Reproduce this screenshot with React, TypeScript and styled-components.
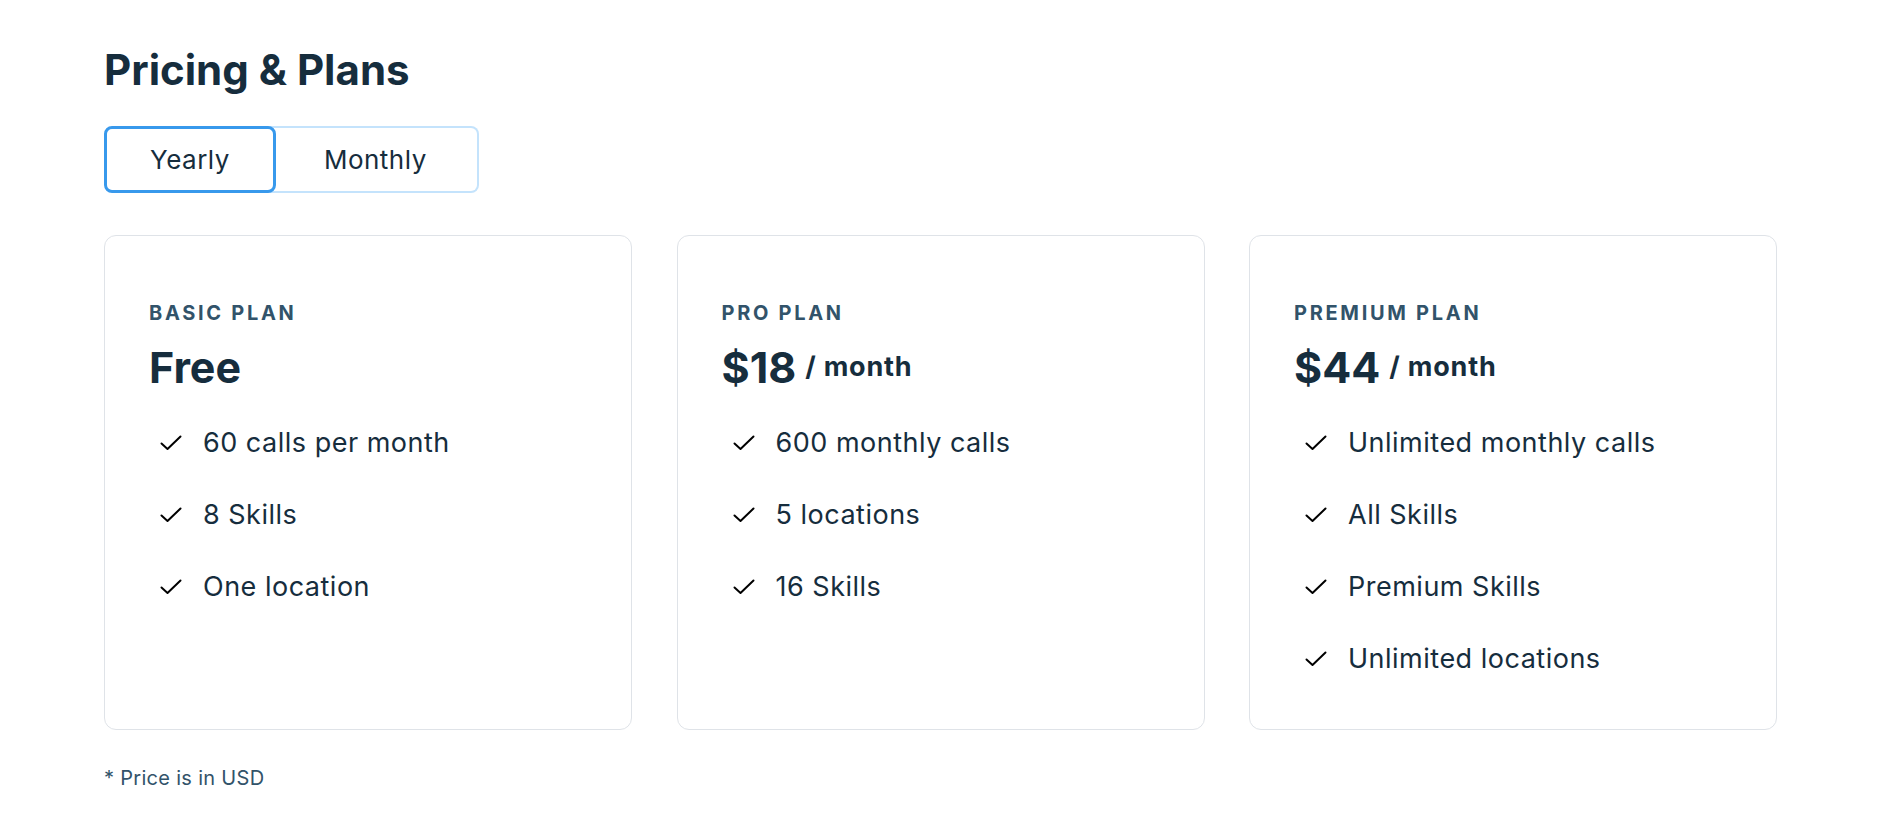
import React, {useState} from 'react';
import styled, {createGlobalStyle} from 'styled-components';

interface Plan {
    name: string;
    price: string;
    period?: string;
    features: string[];
}

const PLANS: Plan[] = [
    {
        name: 'Basic plan',
        price: 'Free',
        features: ['60 calls per month', '8 Skills', 'One location'],
    },
    {
        name: 'Pro plan',
        price: '$18',
        period: '/ month',
        features: ['600 monthly calls', '5 locations', '16 Skills'],
    },
    {
        name: 'Premium plan',
        price: '$44',
        period: '/ month',
        features: ['Unlimited monthly calls', 'All Skills', 'Premium Skills', 'Unlimited locations'],
    },
];

const CheckIcon = () => (
    <CheckSvg viewBox='0 0 24 24' width={24} height={24}>
        <path
            d='M2.5 12.5 L8.5 18 L21.5 5.5'
            fill='none'
            stroke='currentColor'
            strokeWidth={2}
            strokeLinecap='round'
            strokeLinejoin='round'
        />
    </CheckSvg>
);

const PlanCard = ({plan}: {plan: Plan}) => (
    <Card>
        <PlanName>{plan.name}</PlanName>
        <PriceRow>
            <Price>{plan.price}</Price>
            {plan.period && <Period>{plan.period}</Period>}
        </PriceRow>
        <FeatureList>
            {plan.features.map((f) => (
                <Feature key={f}>
                    <CheckIcon/>
                    <span>{f}</span>
                </Feature>
            ))}
        </FeatureList>
    </Card>
);

export default function App() {
    const [cycle, setCycle] = useState<'yearly' | 'monthly'>('yearly');

    return (
        <>
            <GlobalStyle/>
            <Page>
                <Title>{'Pricing & Plans'}</Title>
                <ToggleGroup>
                    <ToggleButton
                        $active={cycle === 'yearly'}
                        onClick={() => setCycle('yearly')}
                    >
                        {'Yearly'}
                    </ToggleButton>
                    <ToggleButton
                        $active={cycle === 'monthly'}
                        onClick={() => setCycle('monthly')}
                    >
                        {'Monthly'}
                    </ToggleButton>
                </ToggleGroup>
                <CardGrid>
                    {PLANS.map((p) => (
                        <PlanCard
                            key={p.name}
                            plan={p}
                        />
                    ))}
                </CardGrid>
                <Footnote>{'* Price is in USD'}</Footnote>
            </Page>
        </>
    );
}

const GlobalStyle = createGlobalStyle`
    body {
        margin: 0;
        background: #ffffff;
        font-family: Inter, 'Noto Sans', sans-serif;
        color: #162d3d;
    }
`;

const Page = styled.div`
    padding: 44px 0 40px 104px;
    display: flex;
    flex-direction: column;
    align-items: flex-start;
`;

const Title = styled.h1`
    margin: 0;
    font-size: 42px;
    line-height: 52px;
    font-weight: 700;
    color: #162d3d;
`;

const ToggleGroup = styled.div`
    display: flex;
    margin-top: 30px;
`;

const ToggleButton = styled.button<{$active: boolean}>`
    height: 67px;
    box-sizing: border-box;
    background: #ffffff;
    font-family: Inter, 'Noto Sans', sans-serif;
    font-size: 26px;
    font-weight: 400;
    letter-spacing: 0.5px;
    color: #162d3d;
    cursor: pointer;
    position: relative;
    ${(p) => (p.$active ? `
        z-index: 1;
        padding: 0 43px;
        border: 3px solid #3899ec;
        border-radius: 8px;
    ` : `
        z-index: 0;
        margin-left: -10px;
        padding: 0 50px 0 58px;
        border: 2px solid #c4e3fc;
        border-left: none;
        border-radius: 0 8px 8px 0;
    `)}
`;

const CardGrid = styled.div`
    display: grid;
    grid-template-columns: repeat(3, 528px);
    column-gap: 44.5px;
    margin-top: 42px;
`;

const Card = styled.div`
    box-sizing: border-box;
    border: 1px solid #dfe3e8;
    border-radius: 12px;
    padding: 65px 44px 52px;
    display: flex;
    flex-direction: column;
`;

const PlanName = styled.div`
    font-size: 20px;
    line-height: 24px;
    font-weight: 700;
    letter-spacing: 2.7px;
    text-transform: uppercase;
    color: #32536a;
`;

const PriceRow = styled.div`
    display: flex;
    align-items: center;
    gap: 9px;
    margin-top: 16px;
`;

const Price = styled.span`
    font-size: 43px;
    line-height: 52px;
    font-weight: 700;
    color: #162d3d;
`;

const Period = styled.span`
    font-size: 27px;
    line-height: 30px;
    font-weight: 700;
    letter-spacing: 0.8px;
    color: #162d3d;
`;

const FeatureList = styled.ul`
    list-style: none;
    margin: 32px 0 0;
    padding: 0;
    display: flex;
    flex-direction: column;
    gap: 36px;
`;

const Feature = styled.li`
    display: flex;
    align-items: center;
    gap: 20px;
    padding-left: 10px;
    font-size: 27px;
    line-height: 36px;
    font-weight: 400;
    letter-spacing: 0.5px;
    color: #162d3d;
`;

const CheckSvg = styled.svg`
    color: #000000;
    flex-shrink: 0;
`;

const Footnote = styled.div`
    margin-top: 36px;
    font-size: 20px;
    line-height: 24px;
    letter-spacing: 0.3px;
    color: #32536a;
`;
